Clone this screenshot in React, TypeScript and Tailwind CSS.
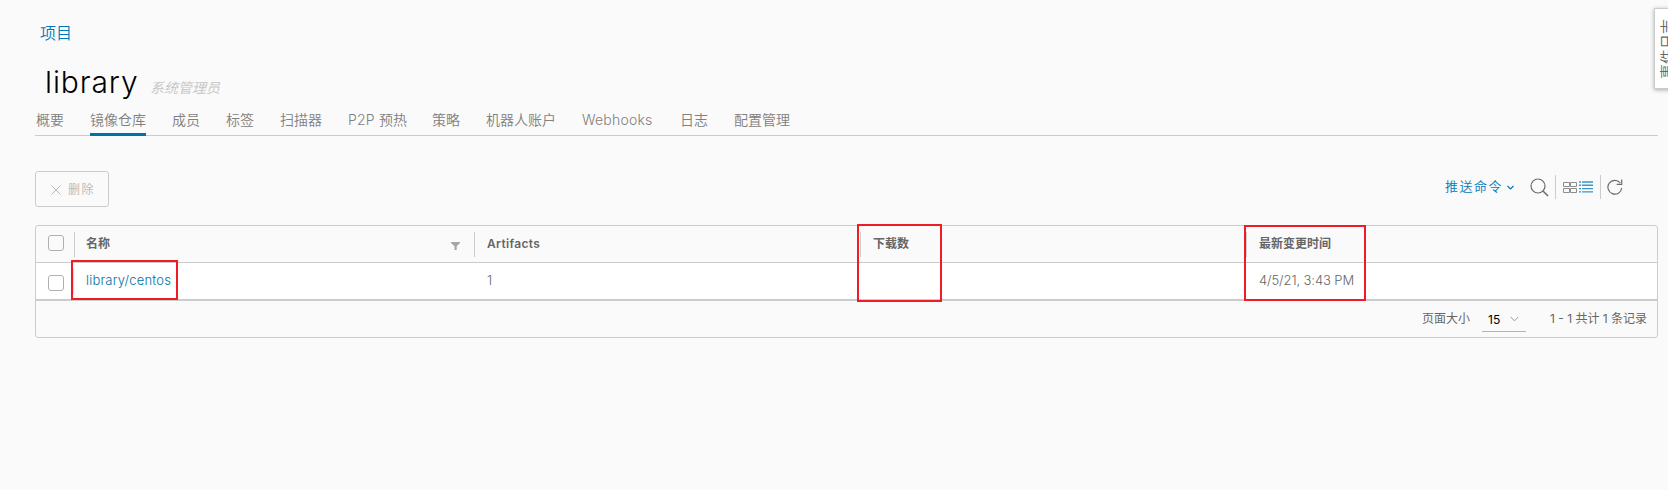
import type { ReactNode } from "react";

const tabs = [
  { label: "概要", box: "w-[28px]" },
  { label: "镜像仓库", box: "w-[56px]", active: true },
  { label: "成员", box: "w-[28px]" },
  { label: "标签", box: "w-[28px]" },
  { label: "扫描器", box: "w-[42px]" },
  { label: "P2P 预热", box: "w-[58px] tracking-[0.2px]" },
  { label: "策略", box: "w-[28px]" },
  { label: "机器人账户", box: "w-[70px]" },
  { label: "Webhooks", box: "w-[72px] tracking-[0.2px]" },
  { label: "日志", box: "w-[28px]" },
  { label: "配置管理", box: "w-[56px]" },
];

function Checkbox() {
  return <span className="block size-4 rounded-[3px] border border-[#b0b0b0]" />;
}

function HeadCell({ children, className }: { children: ReactNode; className: string }) {
  return (
    <div className={`flex h-[25px] items-center border-l border-[#ccc] ${className}`}>{children}</div>
  );
}

function Mark({ className }: { className: string }) {
  return <div className={`pointer-events-none absolute border-2 border-[#ee1c24] ${className}`} />;
}

export default function App() {
  return (
    <div className="relative h-[490px] w-[1668px] overflow-hidden bg-[#fafafa] font-['Inter','Noto_Sans_CJK_SC',sans-serif] text-[#666]">
      <div className="flex flex-col pr-[10px] pl-[35px]">
        <a className="mt-[21px] ml-[5px] h-6 text-[16px] leading-6 font-[350] text-[#0079b8]">项目</a>
        <div className="mt-[15px] ml-[10px] flex h-[44px] items-baseline">
          <h1 className="w-[105px] text-[30px] leading-[44px] font-light tracking-[0.9px] text-black">library</h1>
          <span className="text-[14px] font-[350] text-[#c4c4c4] italic">系统管理员</span>
        </div>
        <nav className="flex h-[32px] gap-[26px] border-b border-[#ccc] pl-px text-[14px] leading-[32px] font-[350] text-[#808080]">
          {tabs.map((t) => (
            <a
              key={t.label}
              className={`h-[32px] whitespace-nowrap ${t.box} ${t.active ? "shadow-[inset_0_-3px_0_#0072a3]" : ""}`}
            >
              {t.label}
            </a>
          ))}
        </nav>

        <div className="mt-[35px] flex h-9 w-[1624px] items-start justify-between">
          <button className="flex h-9 w-[74px] items-center rounded-[3px] border border-[#ccc] pt-px pl-[15px] text-[12px] tracking-[1.4px] text-[#bbb]">
            <svg className="mr-[7px] size-[10px]" viewBox="0 0 10 10" fill="none" stroke="#b8b8b8">
              <path d="M.5.5l9 9M9.5.5l-9 9" />
            </svg>
            删除
          </button>
          <div className="flex h-8 w-[214px] items-center">
            <span className="w-[62px] text-[13px] font-[350] tracking-[1.5px] whitespace-nowrap text-[#0079b8]">推送命令</span>
            <svg className="h-[5px] w-[7px]" viewBox="0 0 7 5" fill="none" stroke="#0079b8" strokeWidth="1.2">
              <path d="M.5 1l3 3 3-3" />
            </svg>
            <svg className="ml-[16px] size-[19px]" viewBox="0 0 19 19" fill="none" stroke="#6b6b6b" strokeWidth="1.2">
              <circle cx="8" cy="8" r="7" />
              <path d="M13 13l5 5" strokeWidth="1.6" />
            </svg>
            <span className="ml-[6px] h-6 w-px bg-[#ccc]" />
            <svg className="ml-[7px] h-[11px] w-[14px]" viewBox="0 0 14 11" fill="none" stroke="#8c8c8c">
              <path d="M.5.5h6v4h-6zM7.5.5h6v4h-6zM.5 6.5h6v4h-6zM7.5 6.5h6v4h-6z" />
            </svg>
            <svg className="ml-[2px] h-[12px] w-[14px]" viewBox="0 0 14 12" fill="none">
              <path d="M0 1h2m1 0h11M0 4.3h2m1 0h11M0 7.6h2m1 0h11M0 10.9h2m1 0h11" stroke="#3a96c6" strokeWidth="1.4" />
            </svg>
            <span className="ml-[7px] h-6 w-px bg-[#ccc]" />
            <svg className="ml-[6px] size-[16px]" viewBox="0 0 16 16" fill="none" stroke="#6b6b6b" strokeWidth="1.2">
              <path d="M13.2 3.9A6.9 6.9 0 1 0 14.7 9M14.7 .5v4.8h-5" />
            </svg>
          </div>
        </div>

        <div className="mt-[18px] flex h-[113px] w-[1623px] flex-col rounded-[3px] border border-[#ccc] text-[12px]">
          <div className="flex h-[37px] items-center border-b border-[#ccc] font-semibold">
            <div className="w-[38px] pb-[2px] pl-3">
              <Checkbox />
            </div>
            <HeadCell className="w-[400px] justify-between pr-[14px] pl-[11px]">
              名称
              <svg className="mt-[4px] h-[8px] w-[9px]" viewBox="0 0 9 8" fill="#a6a6a6">
                <path d="M0 0h9v1L5.7 4.2V8H3.5V4.2L0 1z" />
              </svg>
            </HeadCell>
            <HeadCell className="w-[386px] pl-3 tracking-[0.35px]">Artifacts</HeadCell>
            <HeadCell className="w-[386px] pl-3">下载数</HeadCell>
            <HeadCell className="flex-1 pl-3">最新变更时间</HeadCell>
          </div>
          <div className="flex h-[38px] items-center border-b-2 border-[#ccc] bg-white text-[13px] font-[350]">
            <div className="w-[37px] pt-[3px] pl-3">
              <Checkbox />
            </div>
            <div className="flex h-[26px] w-[401px] items-center border-l border-[#ddd] pl-3 tracking-[0.2px] text-[#0072a3]">library/centos</div>
            <div className="w-[772px] pl-[13px]">1</div>
            <div className="pl-[13px] tracking-[-0.1px]">4/5/21, 3:43 PM</div>
          </div>
          <div className="flex flex-1 items-center justify-end pr-[12px]">
            <span className="w-[60px]">页面大小</span>
            <div className="mt-[2px] flex h-[24px] w-[44px] items-center border-b border-[#b3b3b3] pl-[6px] text-black">
              15
              <svg className="mb-[2px] ml-[10px] h-[6px] w-[9px]" viewBox="0 0 9 6" fill="none" stroke="#9a9a9a">
                <path d="M.5.8l4 4 4-4" />
              </svg>
            </div>
            <span className="ml-[24px] w-[95px] whitespace-nowrap">1 - 1 共计 1 条记录</span>
          </div>
        </div>
      </div>

      <Mark className="top-[260px] left-[71px] h-[40px] w-[107px]" />
      <Mark className="top-[224px] left-[857px] h-[78px] w-[85px]" />
      <Mark className="top-[225px] left-[1244px] h-[76px] w-[122px]" />

      <div className="absolute top-[8px] left-[1654px] flex h-[81px] w-[30px] items-center border border-[#ccc] bg-white pt-[2px] pl-[3px] shadow-[0_1px_4px_#aaa]">
        <span className="rotate-180 text-[15px] leading-[20px] font-[350] whitespace-nowrap [writing-mode:vertical-rl] [text-orientation:sideways]">
          事件日志
        </span>
      </div>
    </div>
  );
}
